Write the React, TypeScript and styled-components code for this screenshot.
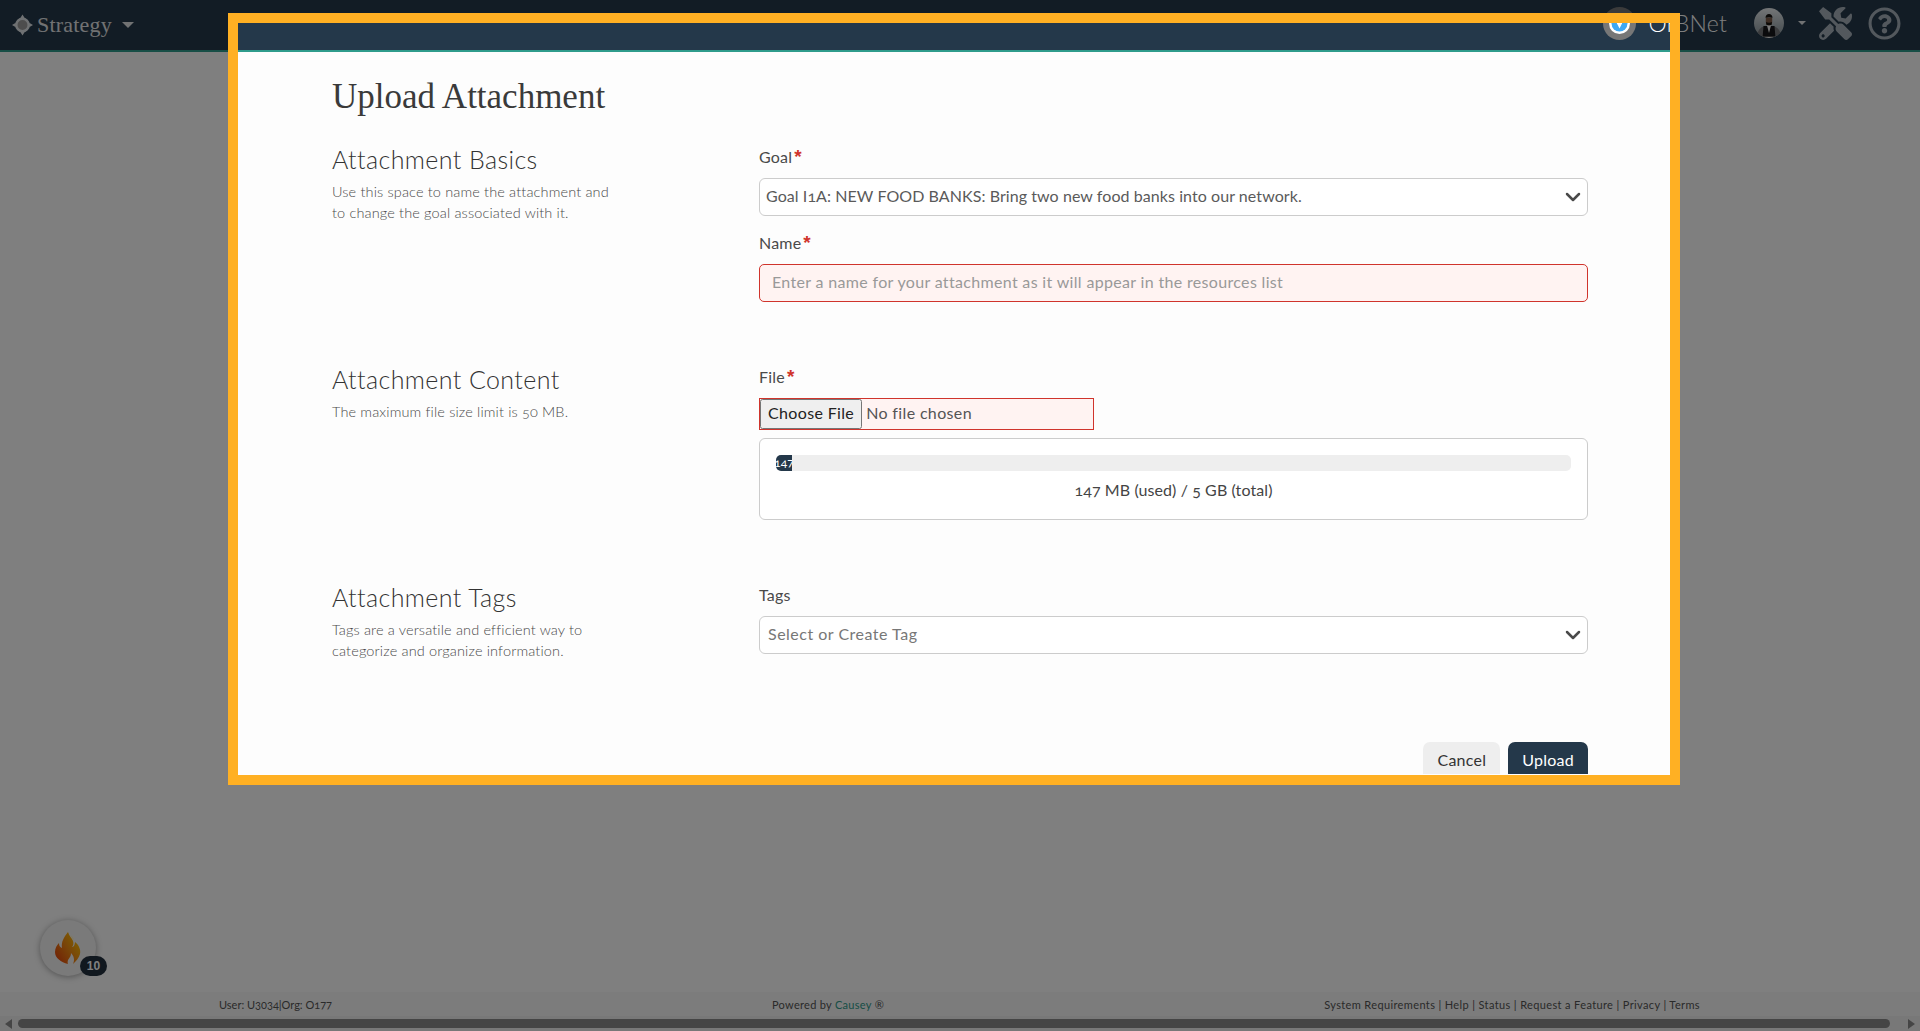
import styled, { createGlobalStyle } from "styled-components";
import { ChevronDown } from "lucide-react";
import { FaTools, FaRegQuestionCircle } from "react-icons/fa";

const SANS = `"Lato", "Open Sans", sans-serif`;
const SERIF = `"Liberation Serif", "DejaVu Serif", serif`;

const GlobalStyle = createGlobalStyle`
  html, body {
    margin: 0;
    height: 100%;
    overflow: hidden;
    background: #fefefe;
    font-family: ${SANS};
    font-variant-numeric: oldstyle-nums;
  }
  * { box-sizing: border-box; }
`;

const Page = styled.div`
  position: relative;
  width: 1920px;
  height: 1031px;
  display: flex;
  flex-direction: column;
  overflow: hidden;
`;

const Navbar = styled.header`
  height: 52px;
  background: #24384a;
  border-bottom: 2px solid #2f9c8c;
  display: flex;
  align-items: center;
  padding: 0 19px 0 12px;
`;

const Brand = styled.div`
  display: flex;
  align-items: center;
  gap: 4px;
  color: #e2e4e6;
  font-family: ${SERIF};
  font-size: 22px;
  letter-spacing: 0.2px;
`;

const Caret = styled.span<{ $size: number }>`
  display: inline-block;
  width: 0;
  height: 0;
  margin-left: ${(p) => p.$size}px;
  border-left: ${(p) => p.$size}px solid transparent;
  border-right: ${(p) => p.$size}px solid transparent;
  border-top: ${(p) => p.$size}px solid #e2e4e6;
`;

const NavRight = styled.div`
  margin-left: auto;
  display: flex;
  align-items: center;
  margin-bottom: 4px;
`;

const OrgName = styled.span`
  color: #fff;
  font-size: 23px;
  font-weight: 300;
  margin: 0 27px 0 13px;
  letter-spacing: 0.2px;
`;

const AvatarCaret = styled(Caret)`
  margin: 0 13px 0 14px;
  color: #a7b1ba;
`;

const NavTools = styled(FaTools)`
  color: #a7b1ba;
  font-size: 33px;
  margin-right: 16px;
`;

const NavHelp = styled(FaRegQuestionCircle)`
  color: #a7b1ba;
  font-size: 33px;
`;

const Main = styled.main`
  flex: 1;
  position: relative;
`;

const FlameButton = styled.div`
  position: absolute;
  left: 40px;
  top: 868px;
  width: 56px;
  height: 56px;
  border-radius: 50%;
  background: #f4f4f4;
  box-shadow: 0 1px 6px rgba(0, 0, 0, 0.35);
  display: flex;
  align-items: center;
  justify-content: center;
`;

const FlameBadge = styled.span`
  position: absolute;
  right: -11px;
  bottom: 0;
  width: 27px;
  height: 20px;
  border-radius: 10px;
  background: #22303f;
  color: #fff;
  font-family: "Liberation Sans", sans-serif;
  font-size: 12px;
  font-weight: 700;
  display: flex;
  align-items: center;
  justify-content: center;
`;

const Footer = styled.footer`
  height: 24px;
  background: #f8f8f8;
  display: grid;
  grid-template-columns: 553px auto 1fr;
  align-items: center;
  padding: 0 220px 0 219px;
  font-size: 11px;
  font-weight: 400;
  color: #555;
`;

const FooterCenter = styled.div`
  letter-spacing: 0.3px;
`;

const FooterRight = styled.div`
  text-align: right;
  white-space: nowrap;
  letter-spacing: 0.37px;
`;

const CauseyLink = styled.span`
  color: #2f9c8c;
`;

const ScrollTrack = styled.div`
  height: 15px;
  background: #f1f1f1;
  display: flex;
  align-items: center;
  padding: 0 5px;
`;

const ScrollArrow = styled.span<{ $dir: "left" | "right" }>`
  width: 0;
  height: 0;
  border-top: 5px solid transparent;
  border-bottom: 5px solid transparent;
  ${(p) =>
    p.$dir === "left"
      ? "border-right: 7px solid #8b8b8b;"
      : "border-left: 7px solid #8b8b8b;"}
`;

const ScrollThumb = styled.div`
  flex: 1;
  height: 9px;
  margin: 0 18px 0 6px;
  border-radius: 5px;
  background: #8b8b8b;
`;

const Modal = styled.section`
  position: absolute;
  left: 238px;
  top: 52px;
  width: 1432px;
  height: 722px;
  overflow: hidden;
  background: #fdfdfd;
  padding: 25px 82px 0 94px;
  color: #333;
`;

const Title = styled.h1`
  margin: 0 0 28px;
  height: 40px;
  font-family: ${SERIF};
  font-size: 35px;
  line-height: 40px;
  font-weight: 400;
  color: #3a3a3a;
`;

const FormSection = styled.div`
  display: grid;
  grid-template-columns: 427px 829px;
  margin-bottom: 63px;
`;

const SectionTitle = styled.h2`
  margin: 0 0 7px;
  font-size: 25px;
  line-height: 29px;
  font-weight: 300;
  letter-spacing: 0.4px;
  color: #333;
`;

const SectionDesc = styled.p`
  margin: 0;
  width: 292px;
  font-size: 14.5px;
  line-height: 21px;
  font-weight: 300;
  letter-spacing: 0.15px;
  color: #4a4a4a;
`;

const FieldColumn = styled.div`
  display: flex;
  flex-direction: column;
`;

const Label = styled.label`
  font-size: 16px;
  line-height: 24px;
  margin-bottom: 9px;
  letter-spacing: 0.2px;
  color: #4a4a4a;
`;

const Required = styled.span`
  color: #d0342c;
  font-family: "Liberation Sans", sans-serif;
  font-size: 19px;
  font-weight: 700;
  line-height: 0;
  margin-left: 2px;
`;

const SelectBox = styled.div<{ $muted?: boolean }>`
  height: 38px;
  margin-bottom: 15px;
  border: 1px solid #ccc;
  border-radius: 6px;
  background: #fff;
  display: flex;
  align-items: center;
  justify-content: space-between;
  padding: 0 2px 3px ${(p) => (p.$muted ? "8px" : "6px")};
  font-size: 16px;
  letter-spacing: ${(p) => (p.$muted ? "0.5px" : "0.07px")};
  color: ${(p) => (p.$muted ? "#777" : "#5a5a5a")};
`;

const SelectChevron = styled(ChevronDown)`
  color: #4a4a4a;
  margin-top: 3px;
`;

const NameInput = styled.input`
  height: 38px;
  border: 1px solid #d0342c;
  border-radius: 5px;
  background: #fff3f2;
  padding: 0 12px 4px;
  font-family: ${SANS};
  font-size: 16px;
  letter-spacing: 0.33px;
  outline: none;
  &::placeholder {
    color: #999;
    opacity: 1;
  }
`;

const FileInput = styled.input`
  width: 335px;
  height: 32px;
  border: 1px solid #d0342c;
  background: #fff3f2;
  margin-bottom: 8px;
  font-family: ${SANS};
  font-size: 16px;
  letter-spacing: 0.35px;
  color: #555;
  &::file-selector-button {
    height: 30px;
    padding: 0 6px 3px;
    font-family: ${SANS};
    font-size: 16px;
    letter-spacing: 0.35px;
    color: #222;
    margin-right: 4px;
  }
`;

const StorageCard = styled.div`
  height: 82px;
  border: 1px solid #ccc;
  border-radius: 6px;
  background: #fff;
  padding: 16px 16px 0;
  display: flex;
  flex-direction: column;
  align-items: center;
`;

const StorageTrack = styled.div`
  width: 100%;
  height: 16px;
  border-radius: 5px;
  background: #eee;
  overflow: hidden;
`;

const StorageFill = styled.div`
  height: 100%;
  background: #24384a;
  color: #fff;
  font-size: 12px;
  line-height: 16px;
  white-space: nowrap;
  overflow: hidden;
  display: flex;
  justify-content: center;
`;

const StorageText = styled.div`
  margin-top: 7px;
  font-size: 16px;
  line-height: 24px;
  letter-spacing: 0.1px;
  color: #444;
`;

/* margin collapses with the last section's margin-bottom */
const Actions = styled.div`
  display: flex;
  justify-content: flex-end;
  gap: 8px;
  margin-top: 73px;
  width: 1256px;
`;

const Button = styled.button<{ $primary?: boolean }>`
  height: 38px;
  padding: 0 14px 3px;
  border: none;
  border-radius: 7px;
  font-family: ${SANS};
  font-size: 16px;
  letter-spacing: 0.25px;
  background: ${(p) => (p.$primary ? "#24384a" : "#eee")};
  color: ${(p) => (p.$primary ? "#fff" : "#333")};
`;

const Spotlight = styled.div`
  position: absolute;
  left: 228px;
  top: 13px;
  width: 1452px;
  height: 772px;
  border: 10px solid #ffb023;
  box-shadow: 0 0 0 3000px rgba(0, 0, 0, 0.5);
  pointer-events: none;
`;

function BrandMark() {
  return (
    <svg width="21" height="22" viewBox="0 0 22 22" fill="none">
      <circle cx="11" cy="11" r="6.5" fill="#9a9a9a" stroke="#dfe3e6" strokeWidth="2.6" />
      <path d="M11 0l2.4 4h-4.8zM11 22l-2.4-4h4.8zM0 11l4-2.4v4.8zM22 11l-4 2.4V8.600z" fill="#dfe3e6" />
    </svg>
  );
}

function OrbBadge() {
  return (
    <svg width="33" height="33" viewBox="0 0 33 33">
      <circle cx="16.500" cy="16.500" r="16.500" fill="#777" />
      <circle cx="16.500" cy="16.500" r="10.500" fill="#fff" />
      <circle cx="16.500" cy="16.500" r="8" fill="#3fa9f5" />
      <path d="M14 9h5v7.500l-2.500 5-2.500-5z" fill="#fff" />
    </svg>
  );
}

function Avatar() {
  return (
    <svg width="30" height="30" viewBox="0 0 30 30">
      <defs>
        <clipPath id="avatar-clip">
          <circle cx="15" cy="15" r="15" />
        </clipPath>
        <linearGradient id="avatar-bg" x1="0" y1="0" x2="0" y2="1">
          <stop offset="0" stopColor="#e8ecee" />
          <stop offset="0.6" stopColor="#aab4ba" />
          <stop offset="1" stopColor="#8d979c" />
        </linearGradient>
      </defs>
      <g clipPath="url(#avatar-clip)">
        <rect width="30" height="30" fill="url(#avatar-bg)" />
        <path d="M3 30c0-7 3-11 8-12h8c5 1 8 5 8 12z" fill="#77797d" />
        <path d="M9.500 18h11l1 12h-13z" fill="#16171a" />
        <path d="M13 17.500h4L15 25z" fill="#f0f0f0" />
        <path d="M11.800 9.500h6.400v4.500c0 2-1.500 3.500-3.200 3.500s-3.200-1.500-3.200-3.500z" fill="#7a5a48" />
        <path d="M11.500 9.800c0-2.500 1.500-3.800 3.500-3.800s3.500 1.300 3.500 3.800c-2-.8-5-.8-7 0zM12 14c1.500 1 4.500 1 6 0l-.5 3h-5z" fill="#17130f" />
        <path d="M0 29.300h30" stroke="#fff" strokeWidth="1.200" />
      </g>
    </svg>
  );
}

function Flame() {
  return (
    <svg width="26" height="32" viewBox="0 0 26 32">
      <defs>
        <linearGradient id="flame-grad" x1="0" y1="1" x2="1" y2="0.2">
          <stop offset="0" stopColor="#e2380c" />
          <stop offset="0.55" stopColor="#f28a12" />
          <stop offset="1" stopColor="#ffc800" />
        </linearGradient>
      </defs>
      <path
        d="M13 0c1 4 4 6 5 9 1 3 0 5-1 6 1.500 0 3-2 3-5 4 3 6 8 5 12-1 4-4 7-7 10 2-4 1-8-2-11 0 3-1 4-3 7-.5 2-.5 3 0 4C6 30 0 26 0 20c0-4 2-7 4-9 0 3 1 4 3 5C6 10 9 5 13 0z"
        fill="url(#flame-grad)"
      />
      <path d="M15.500 3c2 1.500 3 3 3.500 5-1.500-1-3-2.500-3.500-5z" fill="#fff3c4" />
    </svg>
  );
}

export default function App() {
  return (
    <Page>
      <GlobalStyle />
      <Navbar>
        <Brand>
          <BrandMark />
          Strategy
          <Caret $size={6} />
        </Brand>
        <NavRight>
          <OrbBadge />
          <OrgName>OrBNet</OrgName>
          <Avatar />
          <AvatarCaret $size={4} />
          <NavTools />
          <NavHelp />
        </NavRight>
      </Navbar>
      <Main>
        <FlameButton>
          <Flame />
          <FlameBadge>10</FlameBadge>
        </FlameButton>
      </Main>
      <Footer>
        <div>User: U3034|Org: O177</div>
        <FooterCenter>
          Powered by <CauseyLink>Causey</CauseyLink> ®
        </FooterCenter>
        <FooterRight>System Requirements | Help | Status | Request a Feature | Privacy | Terms</FooterRight>
      </Footer>
      <ScrollTrack>
        <ScrollArrow $dir="left" />
        <ScrollThumb />
        <ScrollArrow $dir="right" />
      </ScrollTrack>

      <Modal>
        <Title>Upload Attachment</Title>
        <FormSection>
          <div>
            <SectionTitle>Attachment Basics</SectionTitle>
            <SectionDesc>Use this space to name the attachment and to change the goal associated with it.</SectionDesc>
          </div>
          <FieldColumn>
            <Label>
              Goal<Required>*</Required>
            </Label>
            <SelectBox>
              Goal I1A: NEW FOOD BANKS: Bring two new food banks into our network.
              <SelectChevron size={24} strokeWidth={2.5} />
            </SelectBox>
            <Label>
              Name<Required>*</Required>
            </Label>
            <NameInput placeholder="Enter a name for your attachment as it will appear in the resources list" />
          </FieldColumn>
        </FormSection>
        <FormSection>
          <div>
            <SectionTitle>Attachment Content</SectionTitle>
            <SectionDesc>The maximum file size limit is 50 MB.</SectionDesc>
          </div>
          <FieldColumn>
            <Label>
              File<Required>*</Required>
            </Label>
            <FileInput type="file" />
            <StorageCard>
              <StorageTrack>
                <StorageFill style={{ width: `${(147 / 5120) * 100 * 0.7}%` }}>147</StorageFill>
              </StorageTrack>
              <StorageText>147 MB (used) / 5 GB (total)</StorageText>
            </StorageCard>
          </FieldColumn>
        </FormSection>
        <FormSection>
          <div>
            <SectionTitle>Attachment Tags</SectionTitle>
            <SectionDesc>Tags are a versatile and efficient way to categorize and organize information.</SectionDesc>
          </div>
          <FieldColumn>
            <Label>Tags</Label>
            <SelectBox $muted>
              Select or Create Tag
              <SelectChevron size={24} strokeWidth={2.5} />
            </SelectBox>
          </FieldColumn>
        </FormSection>
        <Actions>
          <Button>Cancel</Button>
          <Button $primary>Upload</Button>
        </Actions>
      </Modal>
      <Spotlight />
    </Page>
  );
}
